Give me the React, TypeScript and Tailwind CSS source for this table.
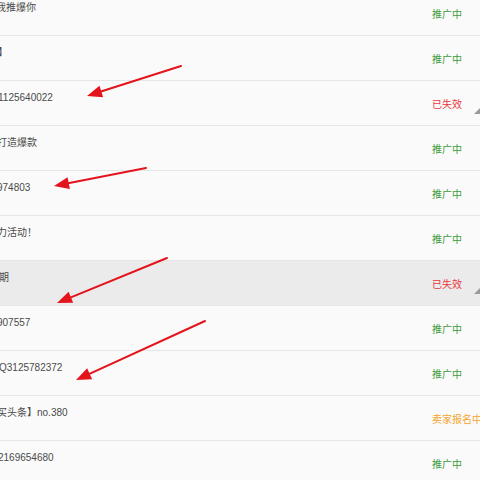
type Status = "active" | "expired" | "signup";

interface Row {
  text: string;
  offset: string;
  status: Status;
  highlight?: boolean;
}

const rows: Row[] = [
  { text: "我推爆你", offset: "ml-[-4px]", status: "active" },
  { text: "】", offset: "ml-[-2px]", status: "active" },
  { text: "1125640022", offset: "ml-[-2px]", status: "expired" },
  { text: "打造爆款", offset: "ml-[-3px]", status: "active" },
  { text: "974803", offset: "ml-[-3px]", status: "active" },
  { text: "力活动！", offset: "ml-[-3px]", status: "active" },
  { text: "期", offset: "ml-[-1px]", status: "expired", highlight: true },
  { text: "907557", offset: "ml-[-3px]", status: "active" },
  { text: "Q3125782372", offset: "ml-[-1px]", status: "active" },
  { text: "买头条】no.380", offset: "ml-[-3px]", status: "signup" },
  { text: "2169654680", offset: "ml-[-2px]", status: "active" },
];

const statusInfo: Record<Status, { label: string; color: string }> = {
  active: { label: "推广中", color: "text-[#3f9b3a]" },
  expired: { label: "已失效", color: "text-[#e8383d]" },
  signup: { label: "卖家报名中", color: "text-[#f4a52e]" },
};

const arrows = [
  { from: [181, 66], to: [87, 96] },
  { from: [146, 168], to: [54, 186] },
  { from: [167, 258], to: [57, 303] },
  { from: [205, 321], to: [76, 380] },
];

function Arrow({ from, to }: { from: number[]; to: number[] }) {
  const dx = to[0] - from[0];
  const dy = to[1] - from[1];
  const len = Math.hypot(dx, dy);
  const ux = dx / len;
  const uy = dy / len;
  const headLen = 15;
  const half = 6;
  const bx = to[0] - ux * headLen;
  const by = to[1] - uy * headLen;
  const p1 = `${bx - uy * half},${by + ux * half}`;
  const p2 = `${bx + uy * half},${by - ux * half}`;

  return (
    <g>
      <line
        x1={from[0]}
        y1={from[1]}
        x2={bx + ux * 2}
        y2={by + uy * 2}
        stroke="#e3141b"
        strokeWidth="2"
        strokeLinecap="round"
      />
      <polygon points={`${to[0]},${to[1]} ${p1} ${p2}`} fill="#e3141b" />
    </g>
  );
}

function ListRow({ row }: { row: Row }) {
  const info = statusInfo[row.status];
  return (
    <div
      className={`relative flex h-[45px] border-b border-[#e6e6e6] ${
        row.highlight ? "bg-[#ebebeb]" : "bg-[#fafafa]"
      }`}
    >
      <div className="flex-1 pt-[11px]">
        <span className={`block whitespace-nowrap text-[#4a4a4a] ${row.offset}`}>
          {row.text}
        </span>
      </div>
      <div className={`w-[48px] whitespace-nowrap pt-[18px] ${info.color}`}>
        {info.label}
      </div>
      {row.status === "expired" && (
        <svg
          className="absolute right-0 top-[27px]"
          width="6"
          height="6"
          viewBox="0 0 6 6"
        >
          <polygon points="6,0 6,6 0,6" fill="#9a9a9a" />
        </svg>
      )}
    </div>
  );
}

export default function App() {
  return (
    <div className="relative h-[480px] w-[480px] overflow-hidden bg-[#fafafa] font-['Liberation_Sans','Noto_Sans_CJK_SC',sans-serif] text-[10px] leading-[12px]">
      <div className="mt-[-9px]">
        {rows.map((row, i) => (
          <ListRow key={i} row={row} />
        ))}
      </div>
      <svg
        className="pointer-events-none absolute left-0 top-0"
        width="480"
        height="480"
        viewBox="0 0 480 480"
      >
        {arrows.map((a, i) => (
          <Arrow key={i} from={a.from} to={a.to} />
        ))}
      </svg>
    </div>
  );
}
